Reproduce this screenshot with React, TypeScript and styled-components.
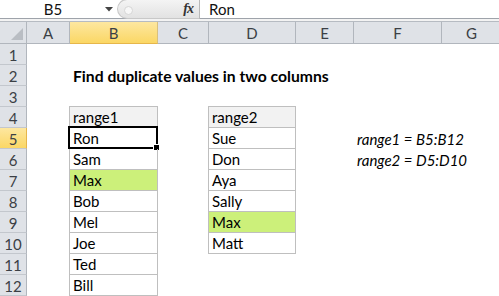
import React from "react";
import styled, { createGlobalStyle, css } from "styled-components";

const Global = createGlobalStyle`
  html, body { margin: 0; padding: 0; background: #fff; }
  body { font-family: Lato, "Liberation Sans", sans-serif; overflow: hidden; }
`;

const COLS = [27, 43, 88, 51, 87, 58, 88, 60];
const LETTERS = ["", "A", "B", "C", "D", "E", "F", "G"];
const FONT = `Lato, "Liberation Sans", sans-serif`;

const Page = styled.div`
  width: 499px;
  height: 296px;
  overflow: hidden;
  display: flex;
  flex-direction: column;
`;

const FormulaBar = styled.div`
  height: 21px;
  display: flex;
  align-items: stretch;
  border-bottom: 1px solid #9ea3aa;
  background: #fff;
`;

const NameBox = styled.div`
  width: 100px;
  display: flex;
  align-items: center;
  justify-content: center;
  font-family: ${FONT};
  font-size: 15px;
  color: #111;
  padding-left: 6px;
  box-sizing: border-box;
`;

const Drop = styled.div`
  width: 17px;
  display: flex;
  align-items: center;
  justify-content: center;
`;

const FxArea = styled.div`
  width: 83px;
  position: relative;
  display: flex;
  align-items: center;
  justify-content: flex-end;
  padding-right: 6px;
  box-sizing: border-box;
  background: linear-gradient(#f4f4f4, #e2e2e2);
  border: 1px solid #c8c8c8;
  border-right: 1px solid #b9b9b9;
  border-radius: 11px 0 0 11px;
  margin-top: -1px;
  margin-bottom: -1px;
`;

const Knob = styled.div`
  position: absolute;
  left: 6px;
  top: 6px;
  width: 7px;
  height: 7px;
  border-radius: 50%;
  background: #f7f7f7;
  border: 1px solid #d6d6d6;
`;

const Fx = styled.span`
  font-family: "Liberation Serif", serif;
  font-style: italic;
  font-weight: bold;
  font-size: 14px;
  color: #333;
  letter-spacing: -1px;
`;

const FormulaText = styled.div`
  flex: 1;
  display: flex;
  align-items: center;
  padding-left: 9px;
  font-family: ${FONT};
  font-size: 15px;
  color: #111;
`;

const Spacer = styled.div`
  height: 2px;
  background: #f3f3f3;
  border-bottom: 1px solid #b6bbc2;
`;

const Row = styled.div<{ $h?: number }>`
  display: flex;
  height: ${(p) => p.$h ?? 21}px;
  flex-shrink: 0;
`;

const ColHead = styled.div<{ $w: number; $sel?: boolean }>`
  width: ${(p) => p.$w}px;
  flex-shrink: 0;
  box-sizing: border-box;
  border-right: 1px solid #b1b6bd;
  border-bottom: 1px solid #b1b6bd;
  background: ${(p) =>
    p.$sel ? "linear-gradient(#fde7a0, #fbd765)" : "#dfe2e7"};
  ${(p) => p.$sel && css`border-bottom-color: #e6b64b; border-right-color:#d8c07f;`}
  display: flex;
  align-items: center;
  justify-content: center;
  font-family: ${FONT};
  font-size: 15px;
  color: #3b3f45;
  padding-top: 1px;
`;

const Corner = styled.div`
  width: 27px;
  flex-shrink: 0;
  box-sizing: border-box;
  border-right: 1px solid #b1b6bd;
  border-bottom: 1px solid #b1b6bd;
  background: #dfe2e7;
  position: relative;
`;

const Tri = styled.div`
  position: absolute;
  right: 3px;
  bottom: 3px;
  width: 0;
  height: 0;
  border-left: 12px solid transparent;
  border-bottom: 12px solid #b9bdc3;
`;

const RowHead = styled.div<{ $sel?: boolean }>`
  width: 27px;
  flex-shrink: 0;
  box-sizing: border-box;
  border-right: 1px solid #b1b6bd;
  border-bottom: 1px solid #c3c7cd;
  background: ${(p) => (p.$sel ? "linear-gradient(#fde7a0, #fbd765)" : "#dfe2e7")};
  ${(p) => p.$sel && css`border-right-color: #e6b64b;`}
  display: flex;
  align-items: center;
  justify-content: center;
  font-family: ${FONT};
  font-size: 15px;
  color: #3b3f45;
  padding-top: 1px;
`;

const Cell = styled.div<{
  $w: number;
  $boxed?: boolean;
  $top?: boolean;
  $fill?: string;
  $bold?: boolean;
  $italic?: boolean;
}>`
  width: ${(p) => p.$w}px;
  flex-shrink: 0;
  box-sizing: border-box;
  position: relative;
  display: flex;
  align-items: flex-end;
  padding: 0 0 0 3px;
  white-space: nowrap;
  font-family: ${FONT};
  font-size: ${(p) => (p.$bold ? 15.7 : 15)}px;
  line-height: 20px;
  font-weight: ${(p) => (p.$bold ? 700 : 400)};
  font-style: ${(p) => (p.$italic ? "italic" : "normal")};
  color: #000;
  background: ${(p) => p.$fill ?? "transparent"};
  ${(p) =>
    p.$boxed &&
    css`
      border-right: 1px solid #bfbfbf;
      border-bottom: 1px solid #bfbfbf;
      box-shadow: -1px 0 0 #bfbfbf ${p.$top ? ", 0 -1px 0 #bfbfbf, -1px -1px 0 #bfbfbf" : ""};
    `}
`;

const Selection = styled.div`
  position: absolute;
  left: -2px;
  top: -2px;
  right: -1px;
  bottom: -1px;
  border: 2px solid #000;
  pointer-events: none;
`;

const Handle = styled.div`
  position: absolute;
  right: -4px;
  bottom: -4px;
  width: 5px;
  height: 5px;
  background: #000;
  border: 1px solid #fff;
`;

type CellDef = {
  text?: string;
  boxed?: boolean;
  top?: boolean;
  fill?: string;
  bold?: boolean;
  italic?: boolean;
  sel?: boolean;
};

const GREEN = "#ccf07a";
const HEAD = "#f2f2f2";

const range1 = ["Ron", "Sam", "Max", "Bob", "Mel", "Joe", "Ted", "Bill"];
const range2 = ["Sue", "Don", "Aya", "Sally", "Max", "Matt"];

function buildRow(r: number): CellDef[] {
  const cells: CellDef[] = Array.from({ length: 7 }, () => ({}));
  if (r === 2) cells[1] = { text: "Find duplicate values in two columns", bold: true };
  if (r === 4) {
    cells[1] = { text: "range1", boxed: true, top: true, fill: HEAD };
    cells[3] = { text: "range2", boxed: true, top: true, fill: HEAD };
  }
  if (r >= 5 && r <= 12) {
    const v = range1[r - 5];
    cells[1] = { text: v, boxed: true, fill: v === "Max" ? GREEN : undefined, sel: r === 5 };
  }
  if (r >= 5 && r <= 10) {
    const v = range2[r - 5];
    cells[3] = { text: v, boxed: true, fill: v === "Max" ? GREEN : undefined };
  }
  if (r === 5) cells[5] = { text: "range1 = B5:B12", italic: true };
  if (r === 6) cells[5] = { text: "range2 = D5:D10", italic: true };
  return cells;
}

export default function App() {
  return (
    <Page>
      <Global />
      <FormulaBar>
        <NameBox>B5</NameBox>
        <Drop>
          <svg width="8" height="5" viewBox="0 0 8 5">
            <path d="M0 0 H8 L4 4.5 Z" fill="#444" />
          </svg>
        </Drop>
        <FxArea>
          <Knob />
          <Fx>fx</Fx>
        </FxArea>
        <FormulaText>Ron</FormulaText>
      </FormulaBar>
      <Spacer />
      <Row $h={22}>
        <Corner>
          <Tri />
        </Corner>
        {COLS.slice(1).map((w, i) => (
          <ColHead key={i} $w={w} $sel={i === 1}>
            {LETTERS[i + 1]}
          </ColHead>
        ))}
      </Row>
      {Array.from({ length: 12 }, (_, idx) => {
        const r = idx + 1;
        const cells = buildRow(r);
        return (
          <Row key={r}>
            <RowHead $sel={r === 5}>{r}</RowHead>
            {cells.map((c, i) => (
              <Cell
                key={i}
                $w={COLS[i + 1]}
                $boxed={c.boxed}
                $top={c.top}
                $fill={c.fill}
                $bold={c.bold}
                $italic={c.italic}
              >
                {c.text}
                {c.sel && (
                  <Selection>
                    <Handle />
                  </Selection>
                )}
              </Cell>
            ))}
          </Row>
        );
      })}
    </Page>
  );
}
